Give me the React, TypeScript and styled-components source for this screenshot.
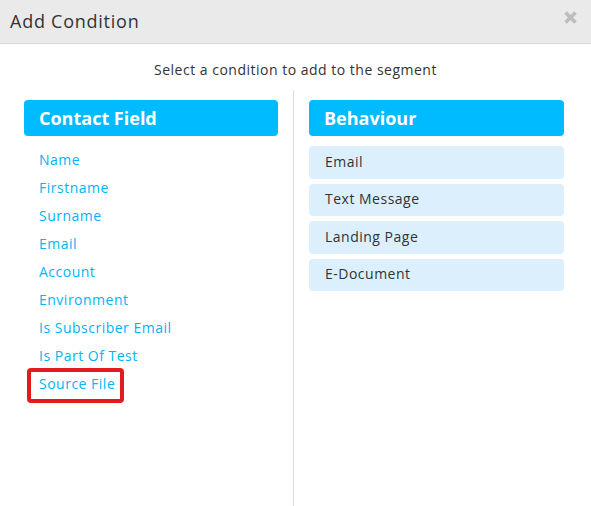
import styled, { createGlobalStyle } from "styled-components";

const GlobalStyle = createGlobalStyle`
  html, body {
    margin: 0;
    padding: 0;
    background: #fff;
  }
  body {
    font-family: "Open Sans", Arial, sans-serif;
    color: #333;
  }
`;

const Modal = styled.div`
  width: 591px;
  height: 506px;
  display: flex;
  flex-direction: column;
  background: #fff;
  overflow: hidden;
`;

const Header = styled.div`
  height: 44px;
  flex: none;
  display: flex;
  align-items: center;
  justify-content: space-between;
  padding: 0 12px 0 10px;
  background: #eaeaea;
  border-bottom: 1px solid #d6d6d6;
  box-sizing: border-box;
`;

const Title = styled.h1`
  margin: -1px 0 0;
  font-size: 18px;
  font-weight: 400;
  letter-spacing: 0.75px;
  color: #333;
`;

const CloseButton = styled.button`
  border: 0;
  background: none;
  padding: 0;
  width: 18px;
  height: 18px;
  display: flex;
  align-items: center;
  justify-content: center;
  align-self: flex-start;
  margin-top: 8px;
  cursor: pointer;
`;

const Subtitle = styled.p`
  margin: 16px 0 0;
  line-height: 20px;
  font-size: 14px;
  letter-spacing: 0.5px;
  text-align: center;
  color: #333;
`;

const Columns = styled.div`
  flex: 1;
  display: grid;
  grid-template-columns: 293px 1fr;
  margin-top: 10px;
`;

const Column = styled.div<{ $side: "left" | "right" }>`
  padding: ${({ $side }) =>
    $side === "left" ? "10px 15px 0 24px" : "10px 27px 0 15px"};
  border-left: ${({ $side }) =>
    $side === "right" ? "1px solid #dcdcdc" : "none"};
`;

const ColumnTitle = styled.div`
  height: 36px;
  display: flex;
  align-items: center;
  padding: 0 0 1px 15px;
  box-sizing: border-box;
  background: #00bbff;
  border-radius: 4px;
  color: #fff;
  font-size: 18px;
  font-weight: 700;
`;

const FieldList = styled.ul`
  list-style: none;
  margin: 10px 0 0;
  padding: 0;
`;

const FieldItem = styled.li`
  height: 28px;
  line-height: 28px;
  padding-left: 15px;
  font-size: 14px;
  letter-spacing: 0.5px;
  color: #00b5f5;
  cursor: pointer;
`;

const FieldLabel = styled.span<{ $marked?: boolean }>`
  position: relative;
  display: inline-block;
  height: 28px;

  ${({ $marked }) =>
    $marked &&
    `
    &::after {
      content: "";
      position: absolute;
      left: -12px;
      right: -9px;
      top: -2px;
      bottom: -5px;
      border: 4px solid #e31b1f;
      border-radius: 4px;
    }
  `}
`;

const BehaviourList = styled.div`
  display: flex;
  flex-direction: column;
  gap: 5px;
  margin-top: 10px;
`;

const BehaviourItem = styled.div`
  height: 32.5px;
  display: flex;
  align-items: center;
  padding: 0 0 2px 16px;
  box-sizing: border-box;
  background: #dbeffc;
  border-radius: 4px;
  font-size: 14px;
  letter-spacing: 0.5px;
  color: #333;
  cursor: pointer;
`;

const contactFields = [
  "Name",
  "Firstname",
  "Surname",
  "Email",
  "Account",
  "Environment",
  "Is Subscriber Email",
  "Is Part Of Test",
  "Source File",
];

const behaviours = ["Email", "Text Message", "Landing Page", "E-Document"];

export default function App() {
  return (
    <>
      <GlobalStyle />
      <Modal>
        <Header>
          <Title>Add Condition</Title>
          <CloseButton aria-label="Close">
            <svg width="15" height="15" viewBox="0 0 15 15">
              <path
                d="M2.5 2.5 L12.5 12.5 M12.5 2.5 L2.5 12.5"
                stroke="#bdbdbd"
                strokeWidth="3.6"
                strokeLinecap="butt"
              />
            </svg>
          </CloseButton>
        </Header>
        <Subtitle>Select a condition to add to the segment</Subtitle>
        <Columns>
          <Column $side="left">
            <ColumnTitle>Contact Field</ColumnTitle>
            <FieldList>
              {contactFields.map((field) => (
                <FieldItem key={field}>
                  <FieldLabel $marked={field === "Source File"}>
                    {field}
                  </FieldLabel>
                </FieldItem>
              ))}
            </FieldList>
          </Column>
          <Column $side="right">
            <ColumnTitle>Behaviour</ColumnTitle>
            <BehaviourList>
              {behaviours.map((item) => (
                <BehaviourItem key={item}>{item}</BehaviourItem>
              ))}
            </BehaviourList>
          </Column>
        </Columns>
      </Modal>
    </>
  );
}
